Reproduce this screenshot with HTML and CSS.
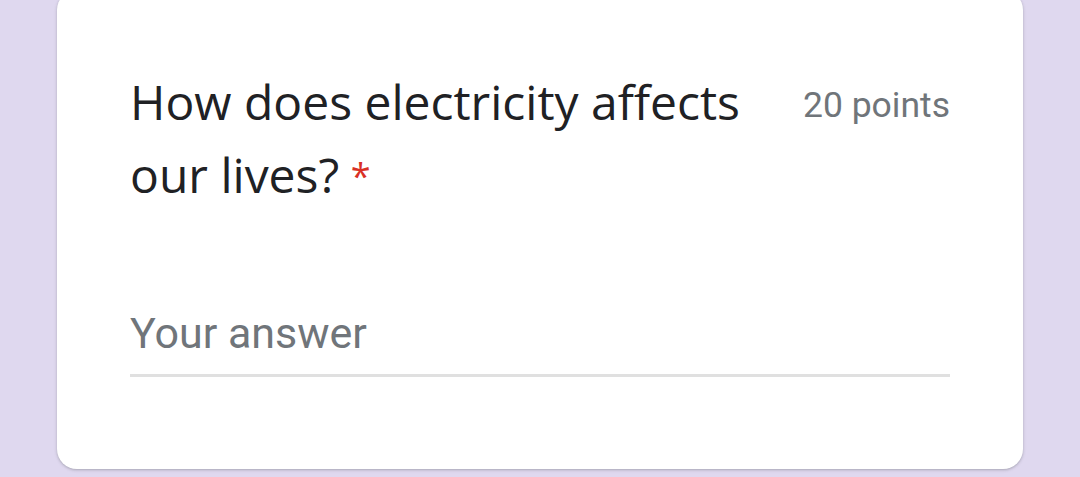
FILE: index.html
```html
<!DOCTYPE html>
<html lang="en">
<head>
    <meta charset="UTF-8">
    <title>Question</title>
    <link rel="stylesheet" href="styles.css">
</head>
<body>

<!-- Question card -->
<div class="card">
    <div class="question-head">
        <div class="question-title">How does electricity affects our lives? <span class="required">*</span></div>
        <div class="points">20 points</div>
    </div>
    <div class="answer">
        <input type="text" class="answer-input" placeholder="Your answer">
    </div>
</div>

</body>
</html>
```

FILE: styles.css
```css
body {
    margin: 0;
    background-color: #dfd8ef;
    font-family: Roboto, "Liberation Sans", sans-serif;
    height: 477px;
    overflow: hidden;
}
/* Card */
.card {
    background-color: #fff;
    margin: -10px 57px 0 57px;
    border-radius: 20px;
    box-shadow: 0 1px 2px rgba(60, 64, 67, 0.2), 0 1px 3px 1px rgba(60, 64, 67, 0.1);
    padding: 75px 73px 92px 73px;
}
.question-head {
    display: flex;
    justify-content: space-between;
    align-items: flex-start;
}
.question-title {
    font-family: "Open Sans", sans-serif;
    font-size: 48px;
    line-height: 73px;
    color: #202124;
    width: 660px;
}
.required {
    font-size: 36px;
    line-height: 0;
    color: #d93025;
    vertical-align: 4px;
    margin-left: -1px;
}
.points {
    font-size: 35.5px;
    color: #70757a;
    line-height: 73px;
    padding-top: 4px;
}
/* Answer field */
.answer {
    margin-top: 97px;
}
.answer-input {
    display: block;
    width: 100%;
    box-sizing: border-box;
    border: none;
    border-bottom: 3px solid #e0e0e0;
    outline: none;
    padding: 0 0 16px 0;
    font-family: Roboto, sans-serif;
    font-size: 43px;
    color: #202124;
    background: transparent;
}
.answer-input::placeholder {
    color: #70757a;
}
```
